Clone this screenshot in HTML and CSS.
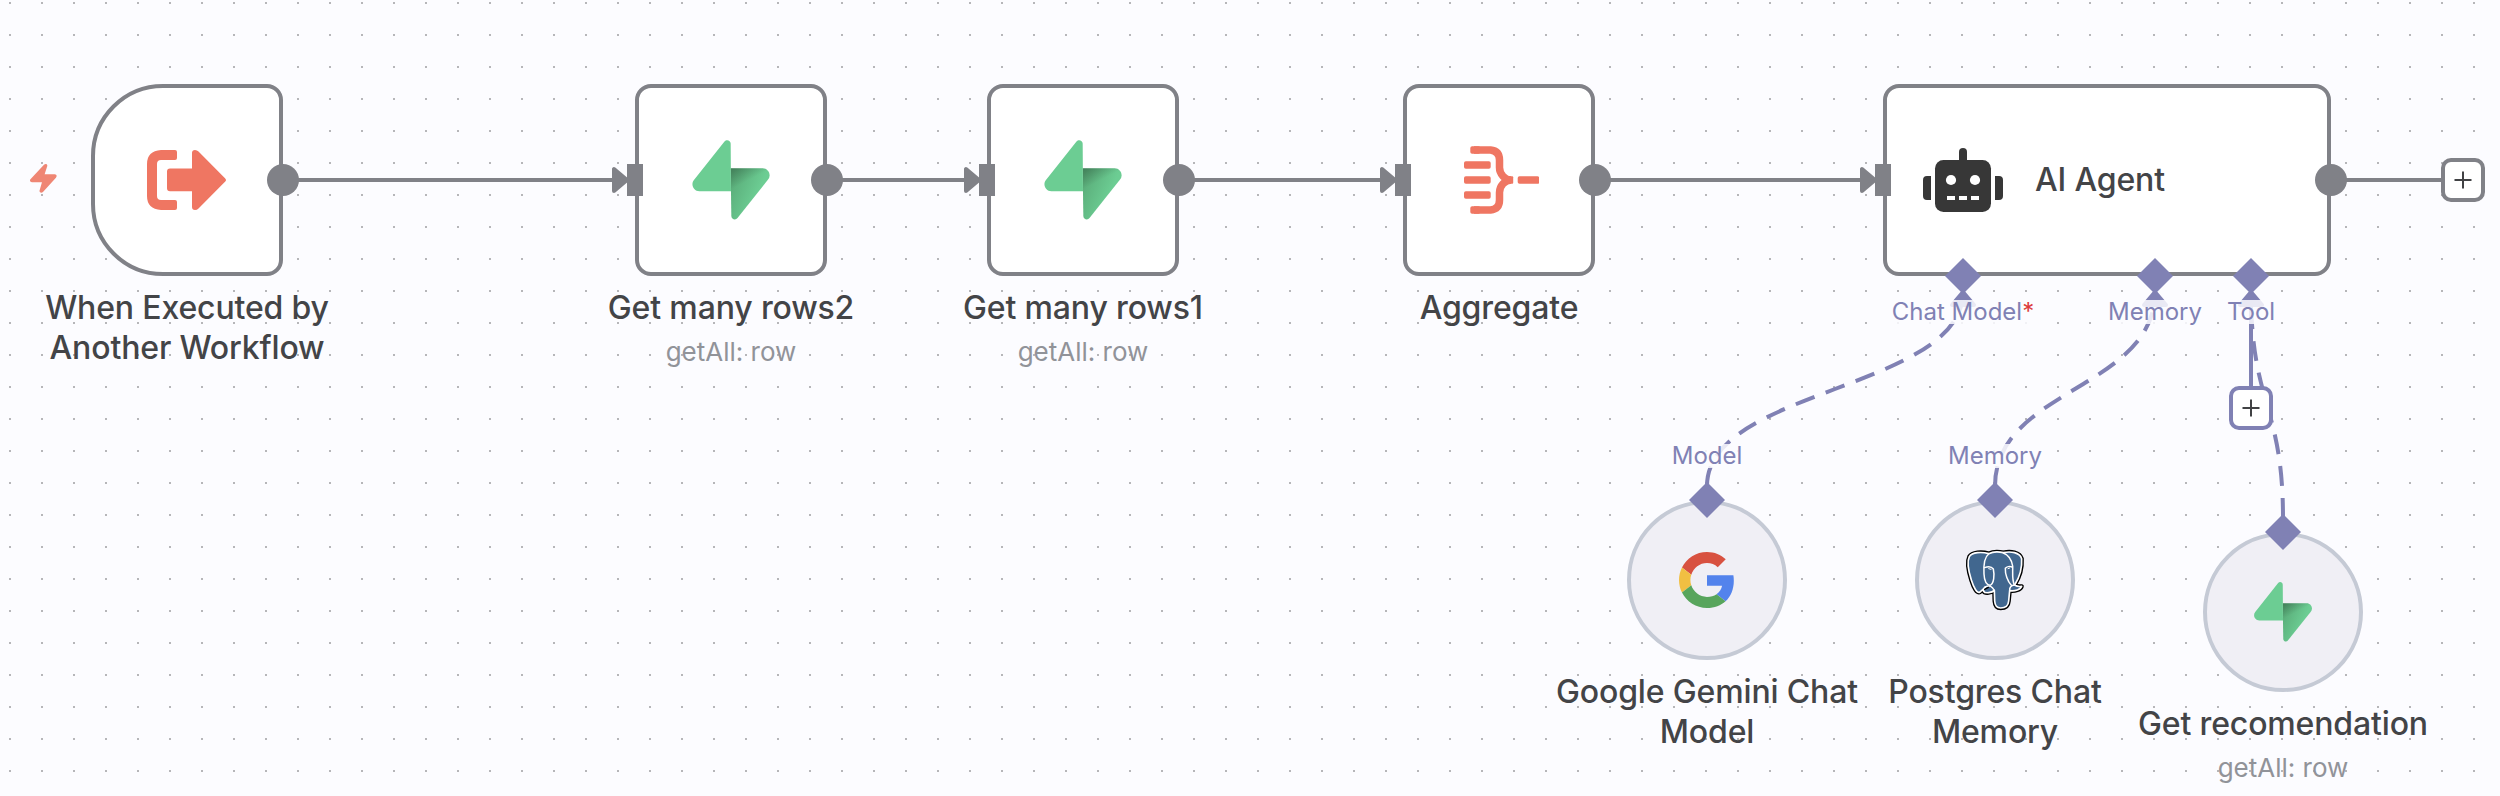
FILE: index.html
```html
<!DOCTYPE html>
<html lang="en">
<head>
<meta charset="utf-8">
<title>Workflow</title>
<link rel="stylesheet" href="styles.css">
</head>
<body>
<svg class="defs" width="0" height="0" aria-hidden="true">
  <defs>
    <linearGradient id="bolt-green" gradientUnits="userSpaceOnUse" x1="53.97" y1="54.97" x2="94.16" y2="71.83">
      <stop offset="0" stop-color="#59ab78"/><stop offset="1" stop-color="#6ccd93"/>
    </linearGradient>
    <linearGradient id="bolt-shade" gradientUnits="userSpaceOnUse" x1="36.16" y1="30.58" x2="56.5" y2="69">
      <stop offset="0" stop-color="#000" stop-opacity="1"/><stop offset="1" stop-color="#000" stop-opacity="0"/>
    </linearGradient>
    <symbol id="supabase" viewBox="0 0 109 113">
      <path fill="url(#bolt-green)" d="M63.7076 110.284C60.8481 113.885 55.0502 111.912 54.9813 107.314L53.9738 40.0627L99.1935 40.0627C107.384 40.0627 111.952 49.5228 106.859 55.9374L63.7076 110.284Z"/>
      <path fill="url(#bolt-shade)" fill-opacity=".42" d="M63.7076 110.284C60.8481 113.885 55.0502 111.912 54.9813 107.314L53.9738 40.0627L99.1935 40.0627C107.384 40.0627 111.952 49.5228 106.859 55.9374L63.7076 110.284Z"/>
      <path fill="#6ccd93" d="M45.317 2.07103C48.1765 -1.53037 53.9745 0.442937 54.0434 5.041L54.4849 72.2922H9.83113C1.64038 72.2922 -2.92775 62.8321 2.1655 56.4175L45.317 2.07103Z"/>
    </symbol>
    <symbol id="plus" viewBox="0 0 18 18">
      <path d="M9 .5V17.5M.5 9H17.5" fill="none" stroke="#414244" stroke-width="2"/>
    </symbol>
  </defs>
</svg>

<main class="canvas">
  <svg class="edges" viewBox="0 0 2500 796">
    <g class="edge-main">
      <path d="M283 180H614M827 180H966M1179 180H1382M1595 180H1863M2331 180H2443"/>
      <g class="arrow">
        <path d="M614 169V191L627 180Z"/>
        <path d="M966 169V191L979 180Z"/>
        <path d="M1382 169V191L1395 180Z"/>
        <path d="M1862 169V191L1875 180Z"/>
      </g>
    </g>
    <g class="edge-ai">
      <path class="dashed" d="M1707 486C1707 389 1963 389 1963 292"/>
      <path class="dashed" d="M1995 486C1995 389 2155 389 2155 292"/>
      <path class="dashed" d="M2283 518C2283 405 2251 405 2251 292"/>
      <path d="M2251 290V388"/>
      <g class="arrow">
        <path d="M1952 305H1974L1963 292Z"/>
        <path d="M2144 305H2166L2155 292Z"/>
        <path d="M2240 305H2262L2251 292Z"/>
      </g>
    </g>
  </svg>

  <svg class="trigger-mark" viewBox="89 311 80 87">
    <path fill="#ef8674" d="M131 313C136 309 142 311 141 317L133 342H163C169 342 171 348 167 352L128 395C123 400 116 396 118 390L125 366H95C89 366 87 360 91 356Z"/>
  </svg>

  <section class="node trigger n-start">
    <div class="box">
      <svg class="icon" viewBox="147 140 80 80" fill="#ef7662">
        <path d="M175 150Q177 150 177 152V158Q177 160 175 160H161Q157 160 157 164V196Q157 200 161 200H175Q177 200 177 202V208Q177 210 175 210H161Q147 209 147 196V164Q147 151 161 150Z"/>
        <path d="M170 168.500H192V153Q192 150 195 150Q197 150 198.500 151.500L225 178.200Q227 180 225 181.800L198.500 208.500Q197 210 195 210Q192 210 192 207V191.300H170Q167 191.300 167 188.300V171.500Q167 168.500 170 168.500Z"/>
      </svg>
      <i class="out"></i>
    </div>
    <div class="caption"><p class="title">When Executed by Another Workflow</p></div>
  </section>

  <section class="node n-rows2">
    <div class="box"><i class="in"></i><svg class="icon"><use href="#supabase"/></svg><i class="out"></i></div>
    <div class="caption"><p class="title">Get many rows2</p><p class="sub">getAll: row</p></div>
  </section>

  <section class="node n-rows1">
    <div class="box"><i class="in"></i><svg class="icon"><use href="#supabase"/></svg><i class="out"></i></div>
    <div class="caption"><p class="title">Get many rows1</p><p class="sub">getAll: row</p></div>
  </section>

  <section class="node n-aggregate">
    <div class="box">
      <i class="in"></i>
      <svg class="icon" viewBox="1459 140 80 80">
        <g fill="#ef7662">
          <rect x="1464" y="161.300" width="26.700" height="7.500" rx="1.800"/>
          <rect x="1464" y="176.300" width="26.700" height="7.500" rx="1.800"/>
          <rect x="1464" y="191.300" width="26.700" height="7.500" rx="1.800"/>
          <rect x="1517.700" y="176.300" width="21.600" height="7.500" rx="1.800"/>
          <rect x="1470.300" y="146.200" width="10" height="7.500" rx="1.800"/>
          <rect x="1470.300" y="206.200" width="10" height="7.500" rx="1.800"/>
          <rect x="1505" y="176.200" width="8.200" height="7.600" rx="1"/>
        </g>
        <path fill="none" stroke="#ef7662" stroke-width="7.500" d="M1474 150H1490.500Q1499.500 151 1499.500 160V167.500C1499.500 174 1505 180 1511 180C1505 180 1499.500 186 1499.500 192.500V200Q1499.500 209 1490.500 210H1474"/>
      </svg>
      <i class="out"></i>
    </div>
    <div class="caption"><p class="title">Aggregate</p></div>
  </section>

  <section class="node n-agent">
    <div class="box">
      <i class="in"></i>
      <svg class="icon" viewBox="0 0 80 80" fill="#373737">
        <path d="M36 22V12A4 4 0 0 1 44 12V22Z"/>
        <rect x="12" y="20" width="56" height="52" rx="8.500"/>
        <path d="M8 36V60H4A4 4 0 0 1 0 56V40A4 4 0 0 1 4 36ZM72 36V60H76A4 4 0 0 0 80 56V40A4 4 0 0 0 76 36Z"/>
        <g fill="#fff"><circle cx="28" cy="40" r="5.100"/><circle cx="52" cy="40" r="5.100"/><path d="M24 56H32V60H24ZM36 56H44V60H36ZM48 56H56V60H48Z"/></g>
      </svg>
      <p class="title">AI Agent</p>
      <i class="out"></i>
    </div>
    <div class="port p-model"><i class="diamond"></i><span class="port-label">Chat Model<b>*</b></span></div>
    <div class="port p-memory"><i class="diamond"></i><span class="port-label">Memory</span></div>
    <div class="port p-tool"><i class="diamond"></i><span class="port-label">Tool</span></div>
  </section>

  <div class="add add-main"><svg><use href="#plus"/></svg></div>
  <div class="add add-tool"><svg><use href="#plus"/></svg></div>

  <section class="node sub-node n-gemini">
    <span class="port-label">Model</span>
    <div class="box">
      <i class="diamond"></i>
      <svg class="icon small" viewBox="0 0 48 48">
        <path fill="#d85140" d="M24 9.500c3.540 0 6.710 1.220 9.210 3.600l6.850-6.850C35.900 2.380 30.470 0 24 0 14.620 0 6.510 5.380 2.560 13.220l7.980 6.190C12.430 13.720 17.740 9.500 24 9.500z"/>
        <path fill="#5383ec" d="M46.980 24.550c0-1.570-.15-3.090-.38-4.550H24v9.020h12.940c-.58 2.960-2.260 5.480-4.780 7.180l7.730 6c4.510-4.180 7.090-10.360 7.090-17.650z"/>
        <path fill="#f1bf42" d="M10.530 28.590c-.48-1.450-.76-2.990-.76-4.590s.27-3.140.76-4.590l-7.980-6.190C.92 16.460 0 20.120 0 24c0 3.880.92 7.540 2.560 10.780l7.970-6.190z"/>
        <path fill="#58a55c" d="M24 48c6.480 0 11.930-2.130 15.890-5.810l-7.730-6c-2.150 1.450-4.920 2.300-8.160 2.300-6.260 0-11.570-4.220-13.470-9.910l-7.980 6.190C6.510 42.620 14.620 48 24 48z"/>
      </svg>
    </div>
    <div class="caption"><p class="title">Google Gemini Chat Model</p></div>
  </section>

  <section class="node sub-node n-postgres">
    <span class="port-label">Memory</span>
    <div class="box">
      <i class="diamond"></i>
      <svg class="icon elephant" viewBox="315 390 180 180">
        <defs>
          <path id="elephant-body" d="M386 401C366 395 336 396 328 410C320 426 327 458 334 480C341 502 351 522 360 516C366 512 370 506 376 501C366 509 368 520 386 518C394 517 399 515 403 511L404 543C405 558 411 564 422 564C436 564 445 557 446 543L449 512C465 514 482 509 485 499C478 500 470 499 464 495C476 476 487 447 485 416C479 397 452 393 430 398C414 394 398 395 386 401Z"/>
        </defs>
        <g stroke-linejoin="round" stroke-linecap="round">
          <use href="#elephant-body" fill="#000" stroke="#000" stroke-width="13"/>
          <use href="#elephant-body" fill="#41678f" stroke="#fff" stroke-width="5"/>
          <g fill="none" stroke="#fff" stroke-width="4.500">
            <path d="M386 402C375 410 370 430 372 462C373 484 378 494 390 496C402 490 404 466 400 447C394 439 384 439 374 443"/>
            <path d="M430 399C445 405 455 420 458 438C459 458 455 475 463 495M456 441C449 438 440 440 436 445C435 462 443 484 454 496M449 512C448 502 452 497 463 495M376 501C384 497 392 498 397 503L403 511"/>
            <path d="M386 446L393 448M444 446L449 444" stroke-width="3"/>
          </g>
          <path fill="none" stroke="#000" stroke-width="4" d="M374 508L385 502"/>
        </g>
      </svg>
    </div>
    <div class="caption"><p class="title">Postgres Chat Memory</p></div>
  </section>

  <section class="node sub-node n-recommend">
    <div class="box"><i class="diamond"></i><svg class="icon mid"><use href="#supabase"/></svg></div>
    <div class="caption"><p class="title">Get recomendation</p><p class="sub">getAll: row</p></div>
  </section>
</main>
</body>
</html>
```
FILE: styles.css
```css
:root {
  --line: #808187;
  --ai: #8081b4;
  --canvas: #fcfcff;
}

* { box-sizing: border-box; }

body {
  margin: 0;
  font-family: Inter, "Liberation Sans", sans-serif;
  color: #434447;
}

p { margin: 0; }
svg { display: block; }
.defs { position: absolute; }

.canvas {
  position: relative;
  width: 2500px;
  height: 796px;
  overflow: hidden;
  background-color: var(--canvas);
  background-image: linear-gradient(90deg, var(--canvas) 30px, transparent 30px), linear-gradient(#b6b6b9 2px, transparent 2px);
  background-size: 32px 32px;
  background-position: 11px 2px;
}

.edges {
  position: absolute;
  inset: 0;
  width: 2500px;
  height: 796px;
  fill: none;
  stroke-width: 4;
}
.edge-main { stroke: var(--line); }
.edge-ai { stroke: var(--ai); }
.dashed { stroke-dasharray: 20 12; }
.arrow { stroke-linejoin: round; }
.edge-main .arrow { fill: var(--line); }
.edge-ai .arrow { fill: var(--ai); }

.trigger-mark {
  position: absolute;
  left: 30px;
  top: 164px;
  width: 26.6px;
  height: 29px;
}

/* nodes on the free canvas */
.node {
  position: absolute;
  top: 84px;
  width: 192px;
  display: flex;
  flex-direction: column;
  align-items: center;
}
.n-start { left: 91px; }
.n-rows2 { left: 635px; }
.n-rows1 { left: 987px; }
.n-aggregate { left: 1403px; }
.n-agent { left: 1883px; width: 448px; }
.n-gemini { left: 1627px; top: 500px; }
.n-postgres { left: 1915px; top: 500px; }
.n-recommend { left: 2203px; top: 532px; }

.box {
  position: relative;
  width: 100%;
  height: 192px;
  display: flex;
  align-items: center;
  justify-content: center;
  background: #fff;
  border: 4px solid var(--line);
  border-radius: 16px;
}
.trigger .box { border-radius: 72px 16px 16px 72px; }
.n-agent .box { justify-content: flex-start; gap: 32px; padding-left: 36px; }

.sub-node { width: 160px; }
.sub-node .box {
  height: 160px;
  border-radius: 50%;
  border-color: #c5cad5;
  background: #f0eff5;
}

.icon { width: 80px; height: 80px; flex: none; }
.icon.small { width: 56px; height: 56px; }
.icon.mid { width: 60px; height: 60px; }
.icon.elephant { width: 60px; height: 60px; overflow: visible; }

/* connection handles */
.in, .out, .diamond { position: absolute; }
.in {
  left: -12px;
  top: 76px;
  width: 16px;
  height: 32px;
  background: var(--line);
}
.out {
  right: -20px;
  top: 76px;
  width: 32px;
  height: 32px;
  border-radius: 50%;
  background: var(--line);
}
.diamond {
  left: calc(50% - 18px);
  top: -22px;
  width: 36px;
  height: 36px;
  background: var(--ai);
  clip-path: polygon(50% 0, 100% 50%, 50% 100%, 0 50%);
}

.port {
  position: absolute;
  top: 216px;
  width: 0;
  display: flex;
  justify-content: center;
}
.port .diamond { left: -18px; top: -42px; }
.p-model { left: 80px; }
.p-memory { left: 272px; }
.p-tool { left: 368px; }

.port-label {
  font-size: 24px;
  line-height: 24px;
  white-space: nowrap;
  color: var(--ai);
  background: rgba(252, 252, 255, .85);
}
.port-label b { font-weight: 400; color: #dc3c3c; }
.sub-node > .port-label {
  position: absolute;
  top: -56px;
}

.caption {
  width: 320px;
  padding-top: 12px;
  text-align: center;
}
.title {
  font-size: 32px;
  line-height: 40px;
  font-weight: 500;
  letter-spacing: -.15px;
}
.sub {
  margin-top: 6px;
  font-size: 26px;
  line-height: 36px;
  color: #919399;
}

/* add-node buttons */
.add {
  position: absolute;
  width: 44px;
  height: 44px;
  display: grid;
  place-items: center;
  background: #fff;
  border: 4px solid var(--line);
  border-radius: 10px;
}
.add svg { width: 18px; height: 18px; }
.add-main { left: 2441px; top: 158px; }
.add-tool { left: 2229px; top: 386px; border-color: var(--ai); }
```
